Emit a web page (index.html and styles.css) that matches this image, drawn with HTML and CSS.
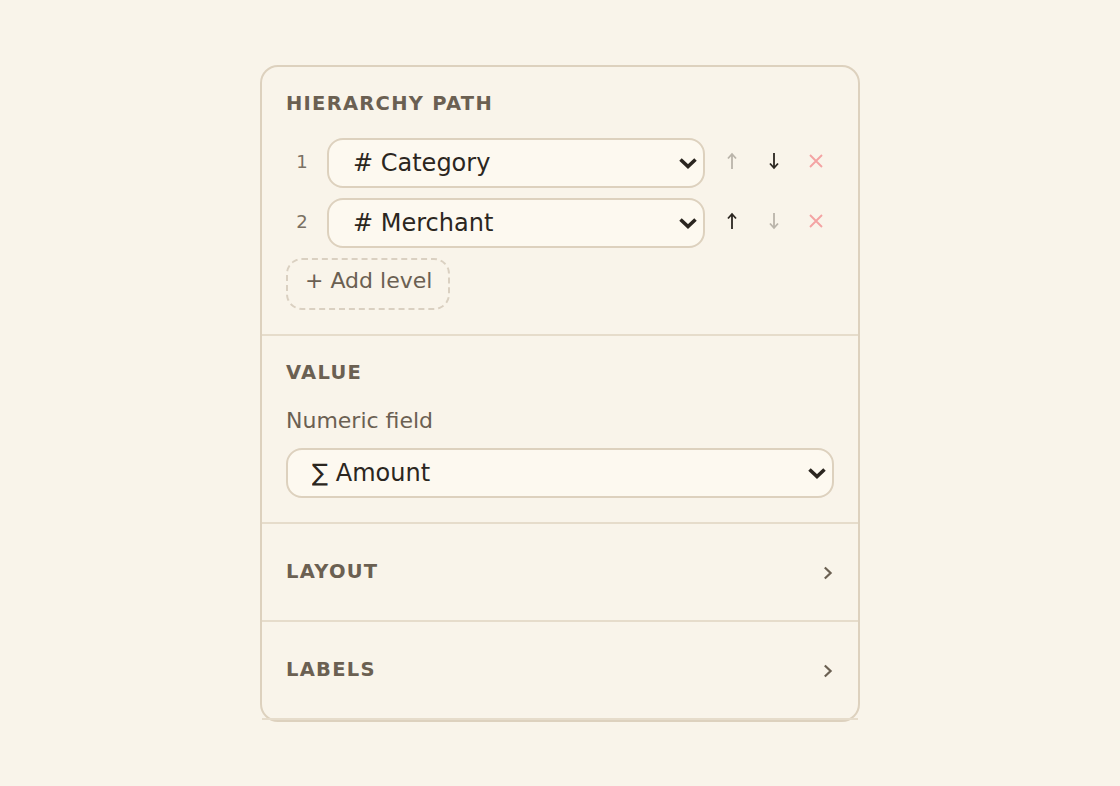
FILE: index.html
```html
<!DOCTYPE html>
<html>

<head>
    <link rel="stylesheet" href="styles.css">
</head>

<body>
    <div class="panel">
        <section class="section">
            <h3 class="section-title">Hierarchy path</h3>
            <div class="levels">
                <div class="level-row">
                    <span class="level-num">1</span>
                    <div class="select-wrap">
                        <select class="field-select">
                            <option># Category</option>
                        </select>
                        <svg class="select-chevron" width="20" height="12" viewBox="0 0 20 12">
                            <path d="M2.5 2.5 L10 9.5 L17.5 2.5" />
                        </svg>
                    </div>
                    <div class="level-actions">
                        <button class="icon-btn" disabled>
                            <svg width="12" height="18" viewBox="0 0 12 18"><path d="M6 17 V2 M2 6.5 L6 2 L10 6.5" /></svg>
                        </button>
                        <button class="icon-btn">
                            <svg width="12" height="18" viewBox="0 0 12 18"><path d="M6 1 V16 M2 11.5 L6 16 L10 11.5" /></svg>
                        </button>
                        <button class="icon-btn remove">
                            <svg width="14" height="14" viewBox="0 0 14 14"><path d="M1 1 L13 13 M13 1 L1 13" /></svg>
                        </button>
                    </div>
                </div>
                <div class="level-row">
                    <span class="level-num">2</span>
                    <div class="select-wrap">
                        <select class="field-select">
                            <option># Merchant</option>
                        </select>
                        <svg class="select-chevron" width="20" height="12" viewBox="0 0 20 12">
                            <path d="M2.5 2.5 L10 9.5 L17.5 2.5" />
                        </svg>
                    </div>
                    <div class="level-actions">
                        <button class="icon-btn">
                            <svg width="12" height="18" viewBox="0 0 12 18"><path d="M6 17 V2 M2 6.5 L6 2 L10 6.5" /></svg>
                        </button>
                        <button class="icon-btn" disabled>
                            <svg width="12" height="18" viewBox="0 0 12 18"><path d="M6 1 V16 M2 11.5 L6 16 L10 11.5" /></svg>
                        </button>
                        <button class="icon-btn remove">
                            <svg width="14" height="14" viewBox="0 0 14 14"><path d="M1 1 L13 13 M13 1 L1 13" /></svg>
                        </button>
                    </div>
                </div>
                <div class="add-row">
                    <button class="add-level">+ Add level</button>
                </div>
            </div>
        </section>

        <section class="section">
            <h3 class="section-title">Value</h3>
            <label class="field-label">Numeric field</label>
            <div class="select-wrap">
                <select class="field-select">
                    <option>∑ Amount</option>
                </select>
                <svg class="select-chevron" width="20" height="12" viewBox="0 0 20 12">
                    <path d="M2.5 2.5 L10 9.5 L17.5 2.5" />
                </svg>
            </div>
        </section>

        <section class="section collapsed">
            <h3 class="section-title">Layout</h3>
            <svg class="expand-chevron" width="10" height="14" viewBox="0 0 10 14"><path d="M1.8 1.5 L7.6 7 L1.8 12.5" /></svg>
        </section>

        <section class="section collapsed">
            <h3 class="section-title">Labels</h3>
            <svg class="expand-chevron" width="10" height="14" viewBox="0 0 10 14"><path d="M1.8 1.5 L7.6 7 L1.8 12.5" /></svg>
        </section>
    </div>
</body>

</html>
```

FILE: styles.css
```css
html,
body {
    margin: 0;
    padding: 0;
}

body {
    background: #f9f4ea;
    font-family: "DejaVu Sans", Verdana, sans-serif;
    color: #2b2620;
    min-height: 100vh;
    display: flex;
    align-items: center;
    justify-content: center;
}

.panel {
    width: 600px;
    box-sizing: border-box;
    border: 2px solid #ddd1be;
    border-radius: 18px;
    background: #f9f4ea;
}

.section {
    padding: 25px 24px 24px;
    border-bottom: 2px solid #e6dccb;
}

.section-title {
    margin: 0 0 22px;
    font-size: 19.5px;
    line-height: 24px;
    font-weight: bold;
    letter-spacing: 0.065em;
    text-transform: uppercase;
    color: #6b6052;
}

/* collapsed sections: title + chevron only */
.section.collapsed {
    padding: 36px 24px;
    display: flex;
    align-items: center;
    justify-content: space-between;
}

.section.collapsed .section-title {
    margin: 0;
}

.expand-chevron {
    margin: 2px 1px 0 0;
    fill: none;
    stroke: #6b6052;
    stroke-width: 2.2;
}

.levels {
    display: flex;
    flex-direction: column;
    gap: 10px;
}

.level-row {
    display: flex;
    align-items: center;
    gap: 9px;
}

.level-num {
    width: 32px;
    text-align: center;
    font-size: 18px;
    color: #7a7063;
    padding-bottom: 2px;
}

.select-wrap {
    position: relative;
    flex: 1;
}

.field-select {
    appearance: none;
    -webkit-appearance: none;
    width: 100%;
    height: 50px;
    box-sizing: border-box;
    padding: 0 40px 0 24px;
    border: 2px solid #ddd1be;
    border-radius: 16px;
    background: #fdf9f0;
    font-family: inherit;
    font-size: 24px;
    color: #2b2620;
    outline: none;
}

.select-chevron {
    position: absolute;
    right: 7px;
    top: 50%;
    margin-top: -6px;
    pointer-events: none;
    fill: none;
    stroke: #2b2620;
    stroke-width: 3.6;
}

.level-actions {
    display: flex;
    gap: 6px;
}

.icon-btn {
    width: 36px;
    height: 36px;
    padding: 0;
    border: none;
    background: none;
    display: flex;
    align-items: center;
    justify-content: center;
    cursor: pointer;
}

.icon-btn svg {
    margin-bottom: 3px;
    fill: none;
    stroke: #2b2620;
    stroke-width: 1.8;
}

.icon-btn:disabled svg {
    stroke: #bab4aa;
}

.icon-btn.remove svg {
    stroke: #f4a3a3;
    stroke-width: 1.9;
}

.add-row {
    display: flex;
}

.add-level {
    padding: 8px 16px 14px 17px;
    border: 2px dashed #dad0c1;
    border-radius: 16px;
    background: none;
    font-family: inherit;
    font-size: 22px;
    line-height: 26px;
    color: #6b6052;
    cursor: pointer;
}

.field-label {
    display: block;
    margin-bottom: 13px;
    font-size: 22px;
    line-height: 28px;
    color: #6b6052;
}
```
